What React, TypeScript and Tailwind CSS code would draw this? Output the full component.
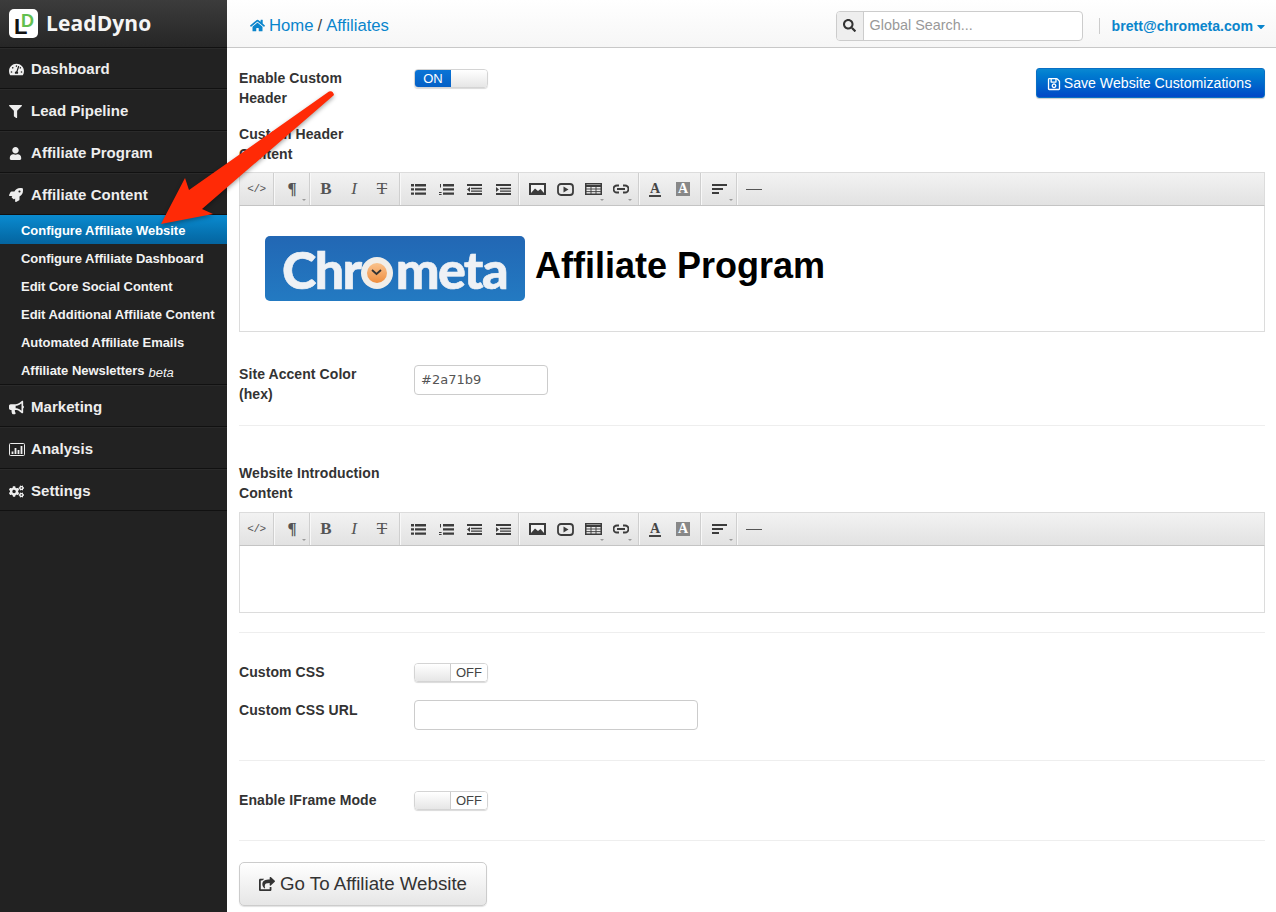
import React from "react";
import {
  FaHome, FaFilter, FaUser, FaRocket, FaBullhorn, FaCogs, FaSearch, FaRegSave,
  FaTachometerAlt, FaCaretDown, FaShareSquare,
} from "react-icons/fa";

const sans = "font-['Liberation_Sans',Arial,sans-serif]";

function NavRow({ icon, label, first }: { icon: React.ReactNode; label: string; first?: boolean }) {
  return (
    <div className={(first ? "h-[41px] " : "h-[42px] ") + "pt-[2px] border-b border-b-[#111] border-t border-t-[#2a2a2a] flex items-center pl-[9px] font-bold text-[15px] tracking-[0.05px] text-[#eee]"}>
      <span className="w-[22px] flex items-center text-[15px]">{icon}</span>
      <span>{label}</span>
    </div>
  );
}

function SubRow({ label, active, beta }: { label: string; active?: boolean; beta?: boolean }) {
  return (
    <div
      className={
        (active ? "h-[29px] pt-[2px] bg-gradient-to-b from-[#0a8bd0] to-[#04649f] text-white " : "h-[28px] pt-px text-[#f2f2f2] ") +
        "flex items-center pl-[21px] font-bold text-[13px] tracking-[-0.04px]"
      }
    >
      {label}
      {beta && <i className="font-normal ml-1 mt-[5px] tracking-normal">beta</i>}
    </div>
  );
}

function Toggle({ on }: { on?: boolean }) {
  return (
    <div className="w-[74px] h-[19px] rounded-[4px] border border-[#d4d4d4] flex overflow-hidden text-[13px] leading-[17px] shadow-[0_1px_1px_rgba(0,0,0,0.15)]">
      {on ? (
        <>
          <div className="w-[36px] bg-gradient-to-b from-[#0a74d6] to-[#0560c6] text-white text-center">ON</div>
          <div className="flex-1 bg-gradient-to-b from-white to-[#e6e6e6]" />
        </>
      ) : (
        <>
          <div className="w-[36px] bg-gradient-to-b from-white to-[#e6e6e6] border-r border-[#ccc]" />
          <div className="flex-1 bg-white text-[#444] text-center">OFF</div>
        </>
      )}
    </div>
  );
}

function Label({ children, className = "" }: { children: React.ReactNode; className?: string }) {
  return <div className={"w-[175px] shrink-0 pr-[26px] font-bold text-[14px] tracking-[0.08px] leading-5 text-[#333] " + className}>{children}</div>;
}

const Sep = () => <div className="w-[2px] h-full border-l border-l-[#cfcfcf] border-r border-r-[#f8f8f8] shrink-0" />;

function Btn({ ml = 0, mr = 0, w, children, caret }: { ml?: number; mr?: number; w: number; children: React.ReactNode; caret?: boolean }) {
  return (
    <div className="h-full flex items-center justify-center relative shrink-0" style={{ width: w, marginLeft: ml, marginRight: mr }}>
      {children}
      {caret && <span className="absolute right-[3px] bottom-[4px] w-0 h-0 border-x-[2px] border-x-transparent border-t-[2px] border-t-[#999]" />}
    </div>
  );
}

function Toolbar() {
  const ic = "#3c3c3c";
  return (
    <div className="h-[34px] border border-[#dcdcdc] bg-gradient-to-b from-[#f2f2f2] to-[#e2e2e2] border-b-[#c4c4c4] flex items-center text-[#444]">
      <Btn w={33}><span className="font-['Liberation_Mono',monospace] text-[11px] tracking-[-0.5px] text-[#555]">&lt;/&gt;</span></Btn>
      <Sep />
      <Btn w={34} caret><span className="font-['Liberation_Serif',serif] font-bold text-[17px] text-[#555]">¶</span></Btn>
      <Sep />
      <Btn ml={1} w={28}><span className="font-['Liberation_Serif',serif] font-bold text-[17px] text-[#555]">B</span></Btn>
      <Btn w={28}><span className="font-['Liberation_Serif',serif] italic text-[17px] text-[#555]">I</span></Btn>
      <Btn w={28} mr={3}><span className="font-['Liberation_Serif',serif] text-[17px] text-[#555] line-through">T</span></Btn>
      <Sep />
      <Btn ml={3} w={28}>
        <svg width="15" height="11" viewBox="0 0 15 11" fill={ic}><path d="M0 0h3v2.4H0zM4 0h11v2.4H4zM0 4.2h3v2.4H0zM4 4.2h11v2.4H4zM0 8.4h3v2.4H0zM4 8.4h11v2.4H4z" /></svg>
      </Btn>
      <Btn w={28}>
        <svg width="15" height="11" viewBox="0 0 15 11" fill={ic}><path d="M1 0h1v3.5H1zM0 8h2.6v1H0zM0 10h2.6v1H0zM4 0h11v2.4H4zM4 4.2h11v2.4H4zM4 8.4h11v2.4H4z" /></svg>
      </Btn>
      <Btn w={28}>
        <svg width="15" height="11" viewBox="0 0 15 11" fill={ic}><path d="M0 5.5L3 3v5zM4 3.8h11v1.4H4zM4 6.4h11v1.4H4zM0 0h15v2H0zM0 9h15v2H0z" /></svg>
      </Btn>
      <Btn w={30}>
        <svg width="15" height="11" viewBox="0 0 15 11" fill={ic}><path d="M3 5.5L0 3v5zM4 3.8h11v1.4H4zM4 6.4h11v1.4H4zM0 0h15v2H0zM0 9h15v2H0z" /></svg>
      </Btn>
      <Sep />
      <Btn ml={3} w={28}>
        <svg width="17" height="12" viewBox="0 0 17 12"><rect x="1" y="1" width="15" height="10" fill="#f4f4f4" stroke={ic} strokeWidth="2" /><path d="M2 10l4-4.5 3 2.5 2.5-2 3.5 4z" fill={ic} /></svg>
      </Btn>
      <Btn w={28}>
        <svg width="17" height="13" viewBox="0 0 17 13" fill="none"><rect x="1" y="1" width="15" height="11" rx="3" stroke={ic} strokeWidth="1.8" /><path d="M6.5 3.5l5 3-5 3z" fill={ic} /></svg>
      </Btn>
      <Btn w={28} caret>
        <svg width="17" height="12" viewBox="0 0 17 12" fill="none" stroke={ic}><rect x="0.75" y="0.75" width="15.5" height="10.5" strokeWidth="1.5" /><path d="M0 3h17" strokeWidth="2" /><path d="M1 6h15M1 8.6h15M6 3v8M11 3v8" strokeWidth="0.9" /></svg>
      </Btn>
      <Btn w={28} mr={3} caret>
        <svg width="16" height="10" viewBox="0 0 16 10" fill="none" stroke={ic} strokeWidth="1.9"><path d="M6 1.5H4a3.5 3.5 0 000 7h2M10 1.5h2a3.5 3.5 0 010 7h-2M4 5h8" /></svg>
      </Btn>
      <Sep />
      <Btn ml={1} w={28}>
        <span className="font-['Liberation_Serif',serif] font-bold text-[14px] leading-[13px] border-b-2 border-[#444] text-[#444] px-[1px]">A</span>
      </Btn>
      <Btn w={28} mr={3}>
        <span className="font-['Liberation_Serif',serif] font-bold text-[14px] leading-[14px] bg-[#888] text-white px-[2px]">A</span>
      </Btn>
      <Sep />
      <Btn w={34} caret>
        <svg width="15" height="10" viewBox="0 0 15 10" fill={ic}><path d="M0 0h15v2H0zM0 4h11v2H0zM0 8h7v2H0z" /></svg>
      </Btn>
      <Sep />
      <Btn w={32}><div className="w-4 h-[1px] bg-[#555]" /></Btn>
    </div>
  );
}

function Chrometa() {
  return (
    <div className="w-[260px] h-[65px] rounded-[5px] bg-gradient-to-b from-[#2267b4] to-[#237ac2] flex items-center justify-center pr-[1px] font-['Lato',sans-serif] font-black text-[52px] leading-none text-[#eef1f5] tracking-[-1.6px] [-webkit-text-stroke:0.6px_#eef1f5]">
      <span>Chr</span>
      <span className="relative w-[32px] h-[32px] mt-[8px] ml-0 mr-[3px] rounded-full bg-[#f1eee9] flex items-center justify-center shrink-0">
        <span className="w-[20px] h-[20px] rounded-full bg-gradient-to-b from-[#f9c28c] to-[#ef8e3c] flex items-center justify-center">
          <svg width="11" height="7" viewBox="0 0 11 7" fill="none" stroke="#333" strokeWidth="1.8"><path d="M1 1l4.5 4L10 1" /></svg>
        </span>
      </span>
      <span>meta</span>
    </div>
  );
}

function Arrow() {
  return (
    <svg className="absolute left-0 top-0 pointer-events-none" width="345" height="235" viewBox="0 0 345 235" style={{ filter: "drop-shadow(0 2px 2px rgba(0,0,0,0.35))" }}>
      <path d="M329 91.5 Q333 90 334 95 L202 209 L213 214 L161 224 L185 178 L189 190 Z" fill="#ff2a06" />
    </svg>
  );
}

export default function App() {
  return (
    <div className={"relative w-[1276px] h-[912px] overflow-hidden flex bg-white " + sans}>
      <aside className="w-[227px] shrink-0 bg-[#222]">
        <div className="h-[48px] bg-gradient-to-b from-[#3c3c3c] to-[#262626] border-b border-[#111] flex items-center pl-[9px]">
          <div className="relative w-[29px] h-[29px] rounded-[5px] bg-white overflow-hidden shrink-0">
            <span className="absolute left-[5px] top-[7px] font-bold text-[22px] leading-[22px] text-[#111]">L</span>
            <span className="absolute left-[12px] top-[2px] font-bold text-[18px] leading-[20px] text-[#62bf4f]">D</span>
          </div>
          <span className="ml-2 font-['Open_Sans',sans-serif] font-bold text-[21px] tracking-[0.1px] text-[#f5f5f5] leading-none">LeadDyno</span>
        </div>
        <NavRow first icon={<FaTachometerAlt />} label="Dashboard" />
        <NavRow icon={<FaFilter className="text-[13px]" />} label="Lead Pipeline" />
        <NavRow icon={<FaUser className="text-[13px]" />} label="Affiliate Program" />
        <NavRow icon={<FaRocket className="text-[14px]" />} label="Affiliate Content" />
        <SubRow label="Configure Affiliate Website" active />
        <SubRow label="Configure Affiliate Dashboard" />
        <SubRow label="Edit Core Social Content" />
        <SubRow label="Edit Additional Affiliate Content" />
        <SubRow label="Automated Affiliate Emails" />
        <SubRow label="Affiliate Newsletters" beta />
        <div className="h-px bg-[#111]" />
        <NavRow icon={<FaBullhorn />} label="Marketing" />
        <NavRow
          icon={
            <svg width="16" height="13" viewBox="0 0 16 13" fill="none" stroke="#eee"><rect x="0.5" y="0.5" width="15" height="12" rx="1" /><path d="M3.5 11V8.5M6.5 11V5M9.5 11V7M12.5 11V3" strokeWidth="1.8" /></svg>
          }
          label="Analysis"
        />
        <NavRow icon={<FaCogs />} label="Settings" />
      </aside>

      <main className="flex-1 min-w-0">
        <header className="h-[48px] pt-[4px] border-b border-[#c8c8c8] bg-gradient-to-b from-white to-[#f6f6f6] flex items-center pl-[23px] pr-[11px]">
          <div className="flex items-center text-[16.7px] text-[#0a85cc]">
            <FaHome className="text-[15px] mr-1" />
            <span>Home</span>
            <span className="text-[#444] mx-1">/</span>
            <span>Affiliates</span>
          </div>
          <div className="ml-auto flex items-center h-[30px] w-[247px] rounded-[4px] border border-[#ccc] bg-white overflow-hidden">
            <div className="w-[27px] h-full bg-[#eee] border-r border-[#ccc] flex items-center justify-center text-[#333] text-[13px]"><FaSearch /></div>
            <span className="pl-[6px] text-[14.4px] text-[#999]">Global Search...</span>
          </div>
          <div className="w-px h-[16px] bg-[#ccc] ml-[16px]" />
          <div className="ml-[12px] mt-[2px] flex items-center font-bold text-[14.1px] text-[#0a85cc]">
            brett@chrometa.com
            <FaCaretDown className="ml-1 w-[8px] h-[13px]" />
          </div>
        </header>

        <div className="pl-[12px] pr-[11px] pt-[20px]">
          <div className="flex justify-between items-start">
            <div className="flex">
              <Label>Enable Custom Header</Label>
              <div className="pt-px"><Toggle on /></div>
            </div>
            <div className="h-[30px] w-[229px] pt-px pr-[3px] rounded-[3px] bg-gradient-to-b from-[#0a88d2] to-[#0447c6] border border-[#0a6fc4] text-white text-[14.15px] flex items-center justify-center shadow-[0_1px_1px_rgba(0,0,0,0.2)]">
              <FaRegSave className="text-[14px] mr-[3px]" />Save Website Customizations
            </div>
          </div>

          <Label className="mt-[16px]">Custom Header Content</Label>
          <div className="mt-[8px]">
            <Toolbar />
            <div className="h-[126px] border border-t-0 border-[#dcdcdc] pl-[25px] pt-[30px] flex items-start">
              <Chrometa />
              <span className="ml-[10px] mt-[8px] font-bold text-[36px] leading-[44px] text-black">Affiliate Program</span>
            </div>
          </div>

          <div className="flex mt-[32px]">
            <Label>Site Accent Color (hex)</Label>
            <div className="w-[134px] h-[30px] mt-px rounded-[4px] border border-[#ccc] flex items-center pl-[6px] text-[13px] text-[#555] font-['DejaVu_Sans',sans-serif]">#2a71b9</div>
          </div>
          <div className="h-px bg-[#eee] mt-[21px]" />

          <Label className="mt-[37px]">Website Introduction Content</Label>
          <div className="mt-[9px]">
            <Toolbar />
            <div className="h-[67px] border border-t-0 border-[#dcdcdc]" />
          </div>
          <div className="h-px bg-[#eee] mt-[19px]" />

          <div className="flex mt-[29px] items-start">
            <Label>Custom CSS</Label>
            <div className="pt-px"><Toggle /></div>
          </div>
          <div className="flex mt-[18px]">
            <Label>Custom CSS URL</Label>
            <div className="w-[284px] h-[30px] rounded-[4px] border border-[#ccc]" />
          </div>
          <div className="h-px bg-[#eee] mt-[30px]" />

          <div className="flex mt-[29px] items-start">
            <Label>Enable IFrame Mode</Label>
            <div className="pt-px"><Toggle /></div>
          </div>
          <div className="h-px bg-[#eee] mt-[30px]" />

          <div className="mt-[21px] w-[248px] h-[44px] rounded-[5px] border border-[#ccc] bg-gradient-to-b from-white to-[#e6e6e6] flex items-center justify-center text-[18.7px] text-[#333] shadow-[0_1px_1px_rgba(0,0,0,0.12)]">
            <FaShareSquare className="text-[16px] mr-[5px]" />Go To Affiliate Website
          </div>
        </div>
      </main>
      <Arrow />
    </div>
  );
}
